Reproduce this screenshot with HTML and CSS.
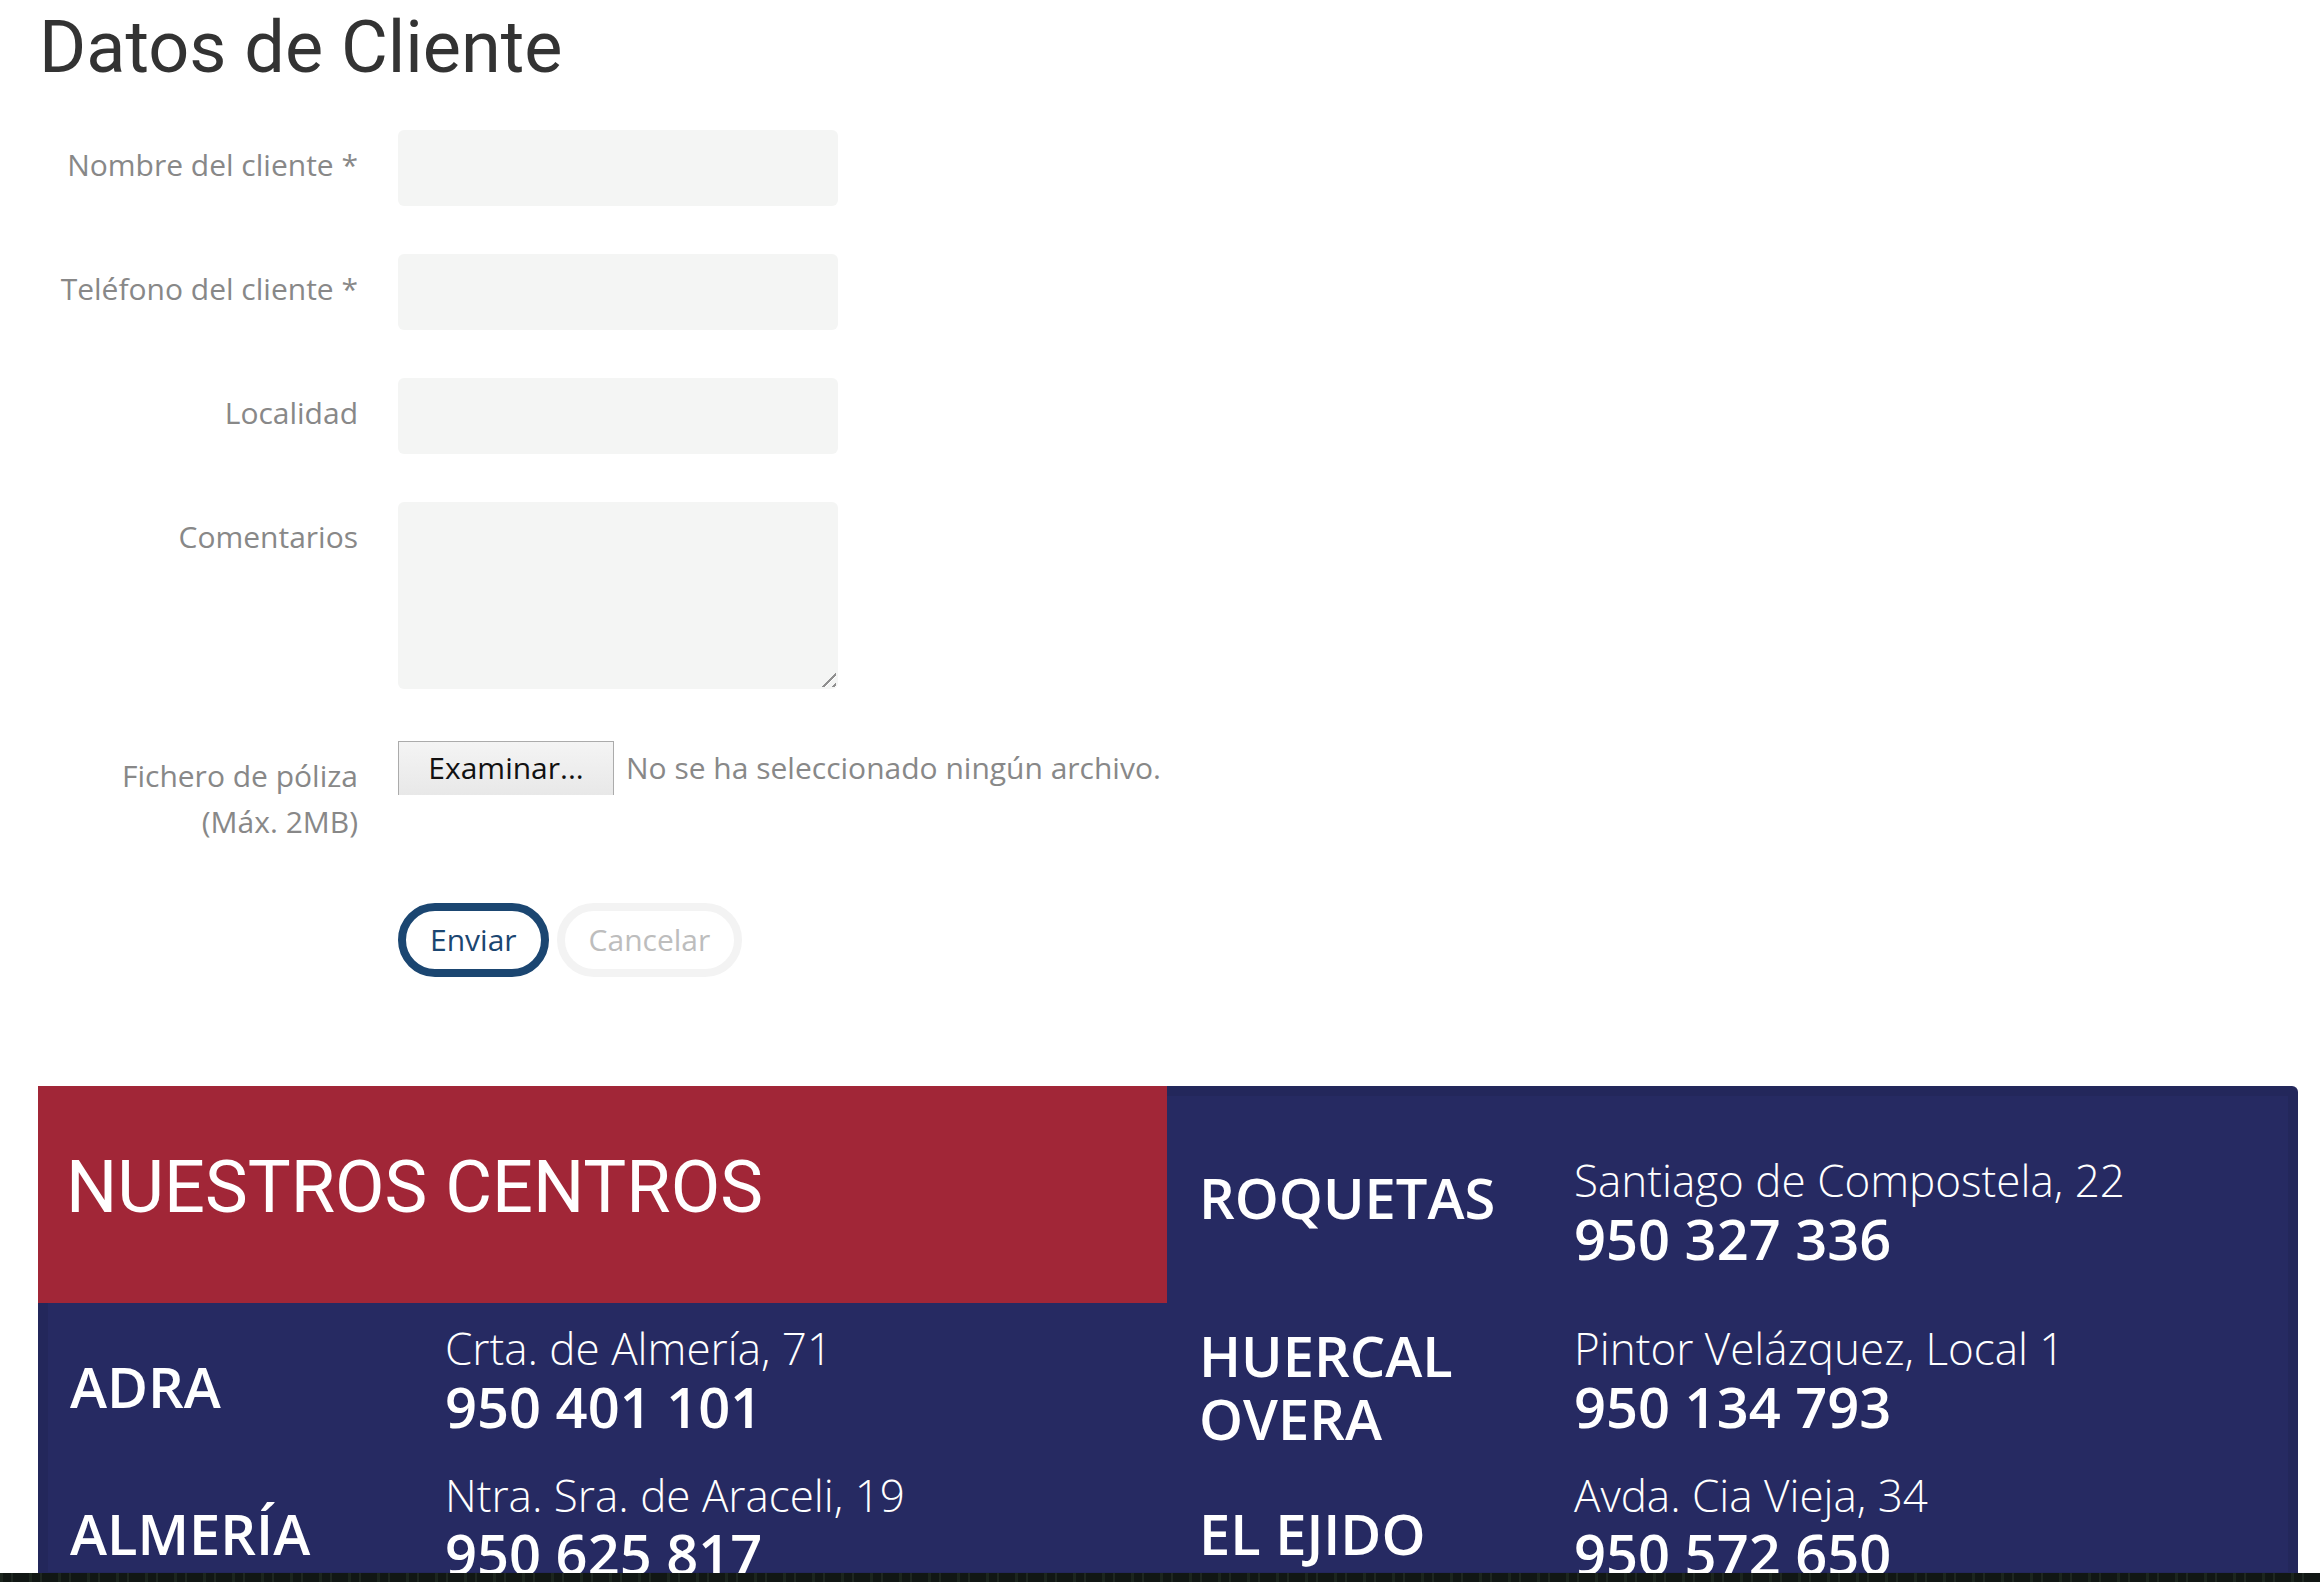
FILE: index.html
```html
<!DOCTYPE html>
<html lang="es">
<head>
<meta charset="utf-8">
<title>Datos de Cliente</title>
<link rel="stylesheet" href="styles.css">
</head>
<body>
<div class="page">
  <h1 class="title">Datos de Cliente</h1>
  <form class="form">
    <div class="row">
      <label class="label">Nombre del cliente *</label>
      <input class="field" type="text">
    </div>
    <div class="row">
      <label class="label">Teléfono del cliente *</label>
      <input class="field" type="text">
    </div>
    <div class="row">
      <label class="label">Localidad</label>
      <input class="field" type="text">
    </div>
    <div class="row row-tall">
      <label class="label">Comentarios</label>
      <div class="area-wrap">
        <textarea class="field area"></textarea>
        <span class="grip"></span>
      </div>
    </div>
    <div class="row row-file">
      <label class="label">Fichero de póliza<br>(Máx. 2MB)</label>
      <div class="file">
        <span class="file-btn">Examinar...</span>
        <span class="file-name">No se ha seleccionado ningún archivo.</span>
      </div>
    </div>
    <div class="row row-actions">
      <span></span>
      <div class="actions">
        <button type="button" class="btn btn-send">Enviar</button>
        <button type="button" class="btn btn-cancel">Cancelar</button>
      </div>
    </div>
  </form>

  <section class="centros">
    <div class="centros-grid centros-top">
      <div class="centros-head"><h2>NUESTROS CENTROS</h2></div>
      <div class="centro centro-first">
        <div class="centro-name">ROQUETAS</div>
        <div class="centro-info">
          <div class="addr">Santiago de Compostela, 22</div>
          <div class="tel">950 327 336</div>
        </div>
      </div>
    </div>
    <div class="centros-grid centros-list">
      <div class="centro">
        <div class="centro-name">ADRA</div>
        <div class="centro-info">
          <div class="addr">Crta. de Almería, 71</div>
          <div class="tel">950 401 101</div>
        </div>
      </div>
      <div class="centro">
        <div class="centro-name">HUERCAL<br>OVERA</div>
        <div class="centro-info">
          <div class="addr">Pintor Velázquez, Local 1</div>
          <div class="tel">950 134 793</div>
        </div>
      </div>
      <div class="centro">
        <div class="centro-name">ALMERÍA</div>
        <div class="centro-info">
          <div class="addr">Ntra. Sra. de Araceli, 19</div>
          <div class="tel">950 625 817</div>
        </div>
      </div>
      <div class="centro">
        <div class="centro-name">EL EJIDO</div>
        <div class="centro-info">
          <div class="addr">Avda. Cia Vieja, 34</div>
          <div class="tel">950 572 650</div>
        </div>
      </div>
    </div>
  </section>
</div>
<div class="bottom-bar"></div>
</body>
</html>
```
FILE: styles.css
```css
* { box-sizing: border-box; }

html, body {
  margin: 0;
  padding: 0;
  background: #ffffff;
}

body {
  font-family: "Open Sans", "Liberation Sans", sans-serif;
}

.page {
  padding: 0 22px 0 38px;
}

.title {
  margin: 0 0 0 1px;
  padding-top: 6px;
  font-family: Roboto, "Liberation Sans", sans-serif;
  font-weight: 400;
  font-size: 72px;
  line-height: 84px;
  color: #333333;
}

.form {
  margin-top: 40px;
}

.row {
  display: grid;
  grid-template-columns: 320px 440px;
  column-gap: 40px;
  align-items: start;
  margin-bottom: 48px;
}

.row-tall { margin-bottom: 52px; }
.row-file { margin-bottom: 58px; }
.row-actions { margin-bottom: 0; }

.label {
  text-align: right;
  font-size: 30px;
  line-height: 46px;
  color: #888888;
  padding-top: 12px;
}

.field {
  display: block;
  width: 440px;
  height: 76px;
  border: 0;
  border-radius: 6px;
  background: #f4f5f4;
  font-family: "Open Sans", sans-serif;
  font-size: 30px;
  padding: 0 16px;
  outline: none;
}

.area-wrap {
  position: relative;
  width: 440px;
}

.area {
  height: 187px;
  resize: none;
  padding: 12px 16px;
}

.grip {
  position: absolute;
  right: 2px;
  bottom: 2px;
  width: 20px;
  height: 20px;
  background: repeating-linear-gradient(135deg,
    rgba(0, 0, 0, 0) 0 4px,
    #8f8f8f 4px 6px,
    #ffffff 6px 7px);
  clip-path: polygon(100% 0, 100% 100%, 0 100%);
  pointer-events: none;
}

.file {
  display: flex;
  align-items: flex-start;
  white-space: nowrap;
}

.file-btn {
  flex: none;
  width: 216px;
  height: 54px;
  border: 1px solid #ababab;
  border-bottom: 0;
  background: linear-gradient(#f4f4f4, #e8e8e8);
  font-size: 30px;
  line-height: 52px;
  text-align: center;
  color: #111111;
}

.file-name {
  margin-left: 12px;
  font-size: 30px;
  line-height: 54px;
  color: #888888;
}

.actions {
  display: flex;
  gap: 8px;
}

.btn {
  height: 74px;
  padding: 0 24px;
  border: 8px solid;
  border-radius: 37px;
  background: #ffffff;
  font-family: "Open Sans", sans-serif;
  font-size: 30px;
  line-height: 1;
  cursor: pointer;
}

.btn-send {
  border-color: #1b4671;
  color: #1b4671;
}

.btn-cancel {
  border-color: #f3f3f3;
  color: #bdbdbd;
}

.centros {
  margin-top: 109px;
  height: 496px;
  overflow: hidden;
  background: #262a62;
  border-radius: 0 6px 0 0;
  box-shadow: inset 0 0 0 10px rgba(0, 0, 0, 0.07);
  color: #ffffff;
}

.centros-grid {
  display: grid;
  grid-template-columns: 1129px 1fr;
}

.centros-top {
  height: 217px;
}

.centros-list {
  padding-top: 10px;
  grid-auto-rows: 147px;
}

.centros-head {
  background: #a12637;
  padding: 60px 0 0 28px;
}

.centros-head h2 {
  margin: 0;
  font-family: Roboto, "Liberation Sans", sans-serif;
  font-weight: 400;
  font-size: 72px;
  line-height: 84px;
  color: #ffffff;
}

.centro {
  display: flex;
  align-items: center;
  padding-left: 32px;
}

.centro-name {
  flex: none;
  width: 375px;
  font-weight: 600;
  font-size: 56px;
  line-height: 63px;
}

.centro-info {
  margin-bottom: 14px;
  white-space: nowrap;
}

.centro-first {
  padding-top: 5px;
}

.centro-first .centro-info {
  margin-top: 28px;
  margin-bottom: 0;
}

.addr {
  font-weight: 300;
  font-size: 44px;
  line-height: 54px;
}

.tel {
  font-weight: 600;
  font-size: 56px;
  line-height: 63px;
}

.bottom-bar {
  position: fixed;
  left: 0;
  right: 0;
  bottom: 0;
  height: 9px;
  background:
    repeating-linear-gradient(90deg, rgba(60, 80, 60, 0.25) 0 3px, rgba(0, 0, 0, 0) 3px 11px, rgba(90, 110, 90, 0.18) 11px 13px, rgba(0, 0, 0, 0) 13px 29px),
    #111714;
}
```
